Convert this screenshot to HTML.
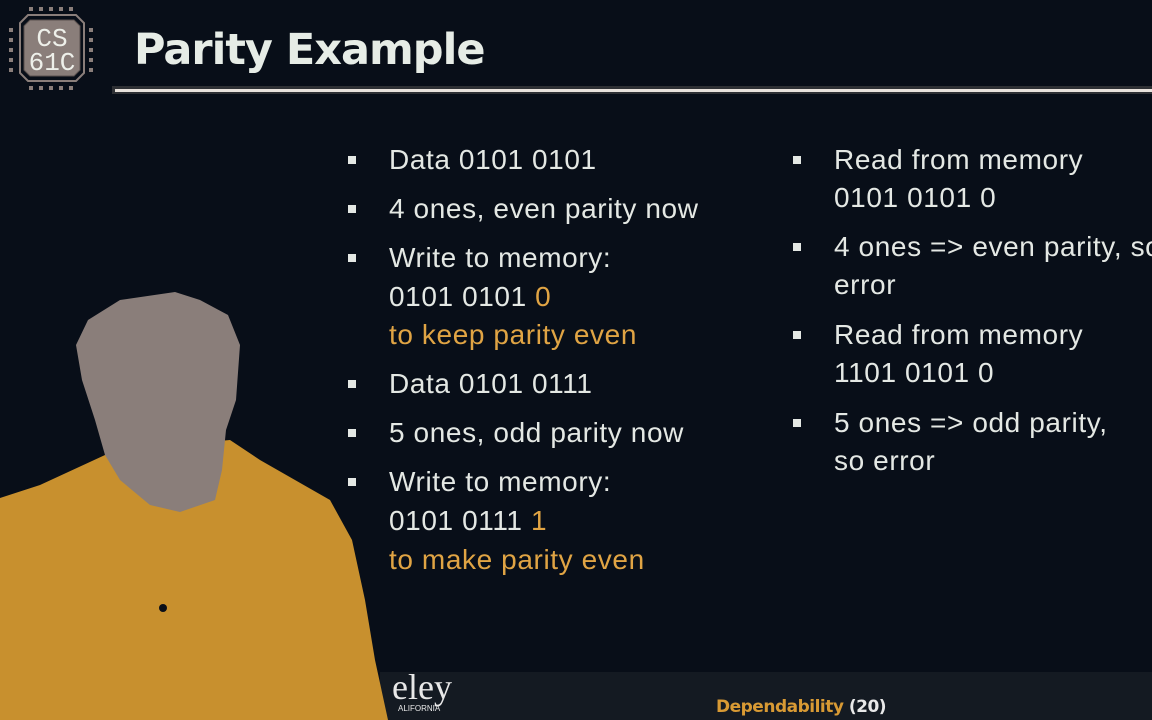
<!DOCTYPE html>
<html><head><style>
body{margin:0;width:1152px;height:720px;background:#080e18;overflow:hidden;position:relative;font-family:"Liberation Sans",sans-serif;}
.t{position:absolute;color:#e4e8e4;font-size:28px;letter-spacing:0.6px;line-height:30px;white-space:nowrap;}
.o{color:#e0a444;}
.b{position:absolute;width:8px;height:8px;background:#e4e8e4;}
</style></head><body>
<svg width="1152" height="720" style="position:absolute;left:0;top:0">
<polygon points="30,20 74,20 80,26 80,70 74,76 30,76 24,70 24,26" fill="#8a7e7a" stroke="#5a504e" stroke-width="1"/>
<polygon points="28,15 76,15 84,23 84,73 76,81 28,81 20,73 20,23" fill="none" stroke="#8a7e7a" stroke-width="2"/>
<g fill="#8a7e7a">
<rect x="29" y="7" width="4" height="4"/><rect x="39" y="7" width="4" height="4"/><rect x="49" y="7" width="4" height="4"/><rect x="59" y="7" width="4" height="4"/><rect x="69" y="7" width="4" height="4"/>
<rect x="29" y="86" width="4" height="4"/><rect x="39" y="86" width="4" height="4"/><rect x="49" y="86" width="4" height="4"/><rect x="59" y="86" width="4" height="4"/><rect x="69" y="86" width="4" height="4"/>
<rect x="9" y="28" width="4" height="4"/><rect x="9" y="38" width="4" height="4"/><rect x="9" y="48" width="4" height="4"/><rect x="9" y="58" width="4" height="4"/><rect x="9" y="68" width="4" height="4"/>
<rect x="89" y="28" width="4" height="4"/><rect x="89" y="38" width="4" height="4"/><rect x="89" y="48" width="4" height="4"/><rect x="89" y="58" width="4" height="4"/><rect x="89" y="68" width="4" height="4"/>
</g>
<text x="52" y="46" font-family="Liberation Mono" font-size="26" fill="#eef0ea" text-anchor="middle">CS</text>
<text x="52" y="70" font-family="Liberation Mono" font-size="26" fill="#eef0ea" text-anchor="middle">61C</text>
<rect x="112" y="86" width="1040" height="8" fill="#2e3034"/>
<rect x="115" y="89" width="1037" height="3" fill="#e8e2dc"/>
<rect x="380" y="672" width="772" height="48" fill="#141a22"/>
<polygon points="0,498 40,485 105,455 150,447 230,440 260,460 330,500 352,540 365,600 375,660 388,720 0,720" fill="#c8902e"/>
<polygon points="175,292 200,300 228,315 240,345 236,400 226,430 222,470 215,500 180,512 150,505 120,480 105,455 95,420 82,380 76,345 88,320 120,300" fill="#8a7e7a"/>
<circle cx="163" cy="608" r="4" fill="#0a0e18"/>
</svg>
<div style="position:absolute;left:134px;top:25px;font-size:43px;font-weight:bold;color:#e6ece6;font-family:'DejaVu Sans',sans-serif;letter-spacing:-1px">Parity Example</div>

<div class="b" style="left:348px;top:156px"></div><div class="t" style="left:389px;top:145px">Data 0101 0101</div>
<div class="b" style="left:348px;top:205px"></div><div class="t" style="left:389px;top:194px">4 ones, even parity now</div>
<div class="b" style="left:348px;top:254px"></div><div class="t" style="left:389px;top:243px">Write to memory:</div>
<div class="t" style="left:389px;top:282px">0101 0101 <span class="o">0</span></div>
<div class="t o" style="left:389px;top:320px">to keep parity even</div>
<div class="b" style="left:348px;top:380px"></div><div class="t" style="left:389px;top:369px">Data 0101 0111</div>
<div class="b" style="left:348px;top:429px"></div><div class="t" style="left:389px;top:418px">5 ones, odd parity now</div>
<div class="b" style="left:348px;top:478px"></div><div class="t" style="left:389px;top:467px">Write to memory:</div>
<div class="t" style="left:389px;top:506px">0101 0111 <span class="o">1</span></div>
<div class="t o" style="left:389px;top:545px">to make parity even</div>

<div class="b" style="left:793px;top:156px"></div><div class="t" style="left:834px;top:145px">Read from memory</div>
<div class="t" style="left:834px;top:183px">0101 0101 0</div>
<div class="b" style="left:793px;top:243px"></div><div class="t" style="left:834px;top:232px">4 ones =&gt; even parity, so</div>
<div class="t" style="left:834px;top:270px">error</div>
<div class="b" style="left:793px;top:331px"></div><div class="t" style="left:834px;top:320px">Read from memory</div>
<div class="t" style="left:834px;top:358px">1101 0101 0</div>
<div class="b" style="left:793px;top:419px"></div><div class="t" style="left:834px;top:408px">5 ones =&gt; odd parity,</div>
<div class="t" style="left:834px;top:446px">so error</div>

<div style="position:absolute;left:392px;top:666px;font-family:'Liberation Serif',serif;font-size:36px;color:#e8e8e8">eley</div>
<div style="position:absolute;left:398px;top:704px;font-size:8px;color:#e8e8e8">ALIFORNIA</div>
<div style="position:absolute;left:716px;top:697px;font-size:17px;font-weight:bold;color:#d89a34;font-family:'DejaVu Sans',sans-serif;letter-spacing:-0.5px">Dependability <span style="color:#e8e8e8">(20)</span></div>
</body></html>
